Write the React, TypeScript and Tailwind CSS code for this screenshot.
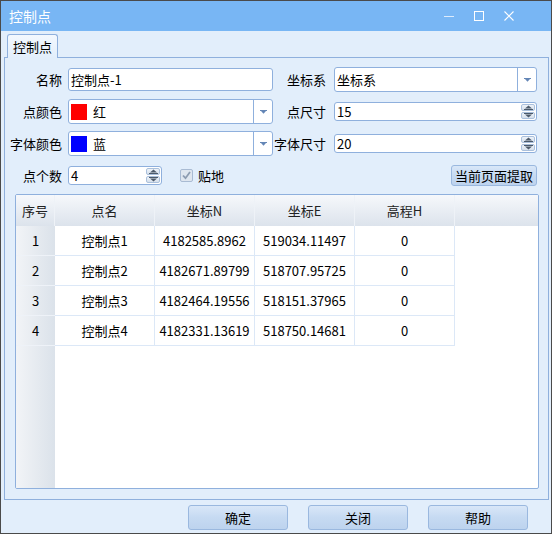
import React from "react";

const FONT = '"Microsoft YaHei", "Noto Sans CJK SC", "Noto Sans", sans-serif';

function DropArrow() {
  return (
    <svg width="7" height="4" viewBox="0 0 7 4">
      <rect x="0" y="0" width="7" height="1" fill="#6486b6" />
      <polygon points="1,1 6,1 3.5,3.8" fill="#6486b6" />
    </svg>
  );
}

function Combo({ children, h = "h-full" }: { children: React.ReactNode; h?: string }) {
  return (
    <div className={`flex ${h} w-full items-stretch rounded-[3px] border border-[#8fb0dd] bg-white`}>
      <div className="flex flex-1 items-center overflow-hidden">{children}</div>
      <div className="flex w-[19px] items-center justify-center border-l border-[#8fb0dd]">
        <DropArrow />
      </div>
    </div>
  );
}

function SpinBtns() {
  return (
    <div className="flex w-[15px] flex-col gap-[1px] py-[1px] pr-[1px]">
      <div className="flex flex-1 items-center justify-center rounded-[2px] border border-[#aac0dc] bg-gradient-to-b from-[#eef3f9] to-[#d6e0ec]">
        <svg width="9" height="5" viewBox="0 0 9 5">
          <polygon points="1,3.6 4.5,0.4 8,3.6" fill="#4c5a6a" />
          <rect x="0" y="4" width="9" height="1" fill="#4c5a6a" />
        </svg>
      </div>
      <div className="flex flex-1 items-center justify-center rounded-[2px] border border-[#aac0dc] bg-gradient-to-b from-[#eef3f9] to-[#d6e0ec]">
        <svg width="9" height="5" viewBox="0 0 9 5">
          <rect x="0" y="0" width="9" height="1" fill="#4c5a6a" />
          <polygon points="1,1.4 8,1.4 4.5,4.6" fill="#4c5a6a" />
        </svg>
      </div>
    </div>
  );
}

function Spinner({ value, w = "w-full" }: { value: string; w?: string }) {
  return (
    <div className={`flex h-[19px] ${w} items-stretch rounded-[3px] border border-[#8fb0dd] bg-white`}>
      <div className="flex flex-1 items-center pl-[2px] text-[13px] leading-none text-black">{value}</div>
      <SpinBtns />
    </div>
  );
}

function Label({ children, pr }: { children: React.ReactNode; pr: string }) {
  return (
    <div className={`flex items-center justify-end ${pr} text-[13px] text-black whitespace-nowrap`}>{children}</div>
  );
}

function Btn({ children, w, h }: { children: React.ReactNode; w: string; h: string }) {
  return (
    <div
      className={`flex ${w} ${h} items-center justify-center rounded-[3px] border border-[#9ab8df] bg-gradient-to-b from-[#d9e7f8] via-[#c6daf2] to-[#bdd3ee] text-[13px] text-black`}
    >
      {children}
    </div>
  );
}

const rows = [
  ["1", "控制点1", "4182585.8962", "519034.11497", "0"],
  ["2", "控制点2", "4182671.89799", "518707.95725", "0"],
  ["3", "控制点3", "4182464.19556", "518151.37965", "0"],
  ["4", "控制点4", "4182331.13619", "518750.14681", "0"],
];

export default function App() {
  return (
    <div
      className="flex h-[534px] w-[552px] flex-col overflow-hidden border border-[#4a4a4a] bg-[#e2eefb]"
      style={{ fontFamily: FONT }}
    >
      {/* title bar */}
      <div className="flex h-[30px] shrink-0 items-center bg-[#78b6f4] pl-[8px] pr-[27px]">
        <div className="text-[14px] text-white">控制点</div>
        <div className="flex-1" />
        <div className="flex items-center">
          <div className="flex w-[30px] justify-center">
            <svg width="10" height="10" viewBox="0 0 10 10">
              <rect x="0" y="5" width="10" height="1" fill="#dcebfc" />
            </svg>
          </div>
          <div className="flex w-[30px] justify-center">
            <svg width="10" height="10" viewBox="0 0 10 10">
              <rect x="0.5" y="0.5" width="9" height="9" fill="none" stroke="#ffffff" strokeWidth="1" />
            </svg>
          </div>
          <div className="flex w-[30px] justify-center">
            <svg width="10" height="10" viewBox="0 0 10 10">
              <path d="M0.5 0.5 L9.5 9.5 M9.5 0.5 L0.5 9.5" stroke="#ffffff" strokeWidth="1.1" />
            </svg>
          </div>
        </div>
      </div>

      {/* body */}
      <div className="flex flex-1 flex-col pl-[3px] pr-[2px] pt-[3px]">
        <div className="flex h-[24px] shrink-0 pl-[3px]">
          <div className="relative z-10 flex h-[24px] w-[51px] items-center justify-center rounded-t-[3px] border border-b-0 border-[#8fb0dd] bg-gradient-to-b from-[#f3f8fe] to-[#e2eefb] text-[13px] text-black">
            控制点
          </div>
        </div>
        <div className="-mt-px flex flex-1 flex-col border border-[#8fb0dd] pt-[9px]">
          <div className="grid grid-cols-[63px_205px_61px_203px] grid-rows-[25px_25px_25px_25px] gap-y-[7px]">
            {/* row 1 */}
            <Label pr="pr-[6px]">名称</Label>
            <div className="flex items-center">
              <div className="flex h-[23px] w-full items-center rounded-[3px] border border-[#8fb0dd] bg-white pl-[2px] text-[13px] text-black">
                控制点-1
              </div>
            </div>
            <Label pr="pr-[8px]">坐标系</Label>
            <Combo>
              <span className="pl-[2px] text-[13px] text-black">坐标系</span>
            </Combo>

            {/* row 2 */}
            <Label pr="pr-[6px]">点颜色</Label>
            <Combo>
              <div className="ml-[2px] h-[16px] w-[16px] bg-[#ff0000]" />
              <span className="ml-[6px] text-[13px] text-black">红</span>
            </Combo>
            <Label pr="pr-[8px]">点尺寸</Label>
            <div className="flex items-center">
              <Spinner value="15" />
            </div>

            {/* row 3 */}
            <Label pr="pr-[6px]">字体颜色</Label>
            <Combo>
              <div className="ml-[2px] h-[16px] w-[16px] bg-[#0000ff]" />
              <span className="ml-[6px] text-[13px] text-black">蓝</span>
            </Combo>
            <Label pr="pr-[8px]">字体尺寸</Label>
            <div className="flex items-center">
              <Spinner value="20" />
            </div>

            {/* row 4 */}
            <Label pr="pr-[6px]">点个数</Label>
            <div className="flex items-center">
              <Spinner value="4" w="w-[94px]" />
              <div className="ml-[18px] flex h-[13px] w-[13px] items-center justify-center rounded-[2px] border border-[#a9bbd3] bg-[#dfe6ef]">
                <svg width="11" height="11" viewBox="0 0 11 11">
                  <path d="M2 5.5 L4.5 8.2 L9 2" fill="none" stroke="#8d9cb1" strokeWidth="1.8" />
                </svg>
              </div>
              <span className="ml-[5px] text-[13px] text-black">贴地</span>
            </div>
            <div className="col-span-2 flex items-center justify-end">
              <Btn w="w-[86px]" h="h-[21px]">当前页面提取</Btn>
            </div>
          </div>

          {/* data grid */}
          <div className="mb-[10px] ml-[10px] mr-[9px] mt-[6px] flex flex-1 flex-col overflow-hidden rounded-[2px] border border-[#8fb0dd] bg-white">
            <div className="flex h-[31px] shrink-0 bg-gradient-to-b from-[#f6f8fb] to-[#dce3ec] text-[13px] text-[#222]">
              <div className="flex w-[39px] items-center justify-center border-r border-[#eef2f7]">序号</div>
              <div className="flex w-[100px] items-center justify-center border-r border-[#eef2f7]">点名</div>
              <div className="flex w-[100px] items-center justify-center border-r border-[#eef2f7]">坐标N</div>
              <div className="flex w-[100px] items-center justify-center border-r border-[#eef2f7]">坐标E</div>
              <div className="flex w-[100px] items-center justify-center border-r border-[#eef2f7]">高程H</div>
              <div className="flex-1" />
            </div>
            <div className="flex flex-1">
              <div className="flex w-[39px] flex-col bg-gradient-to-r from-[#f2f4f7] to-[#dbe2ea]">
                {rows.map((r) => (
                  <div
                    key={r[0]}
                    className="flex h-[30px] items-center justify-center border-b border-[#eef2f8] text-[13px] text-black"
                  >
                    {r[0]}
                  </div>
                ))}
              </div>
              <div className="flex flex-1 flex-col">
                {rows.map((r) => (
                  <div key={r[0]} className="flex h-[30px] text-[13px] text-black">
                    {r.slice(1).map((c, i) => (
                      <div
                        key={i}
                        className="flex w-[100px] items-center justify-center border-b border-r border-[#dce8f7]"
                      >
                        {c}
                      </div>
                    ))}
                  </div>
                ))}
              </div>
            </div>
          </div>
        </div>

        {/* footer buttons */}
        <div className="flex h-[33px] shrink-0 items-start justify-end gap-[20px] pr-[21px] pt-[5px]">
          <Btn w="w-[100px]" h="h-[25px]">确定</Btn>
          <Btn w="w-[100px]" h="h-[25px]">关闭</Btn>
          <Btn w="w-[100px]" h="h-[25px]">帮助</Btn>
        </div>
      </div>
    </div>
  );
}
